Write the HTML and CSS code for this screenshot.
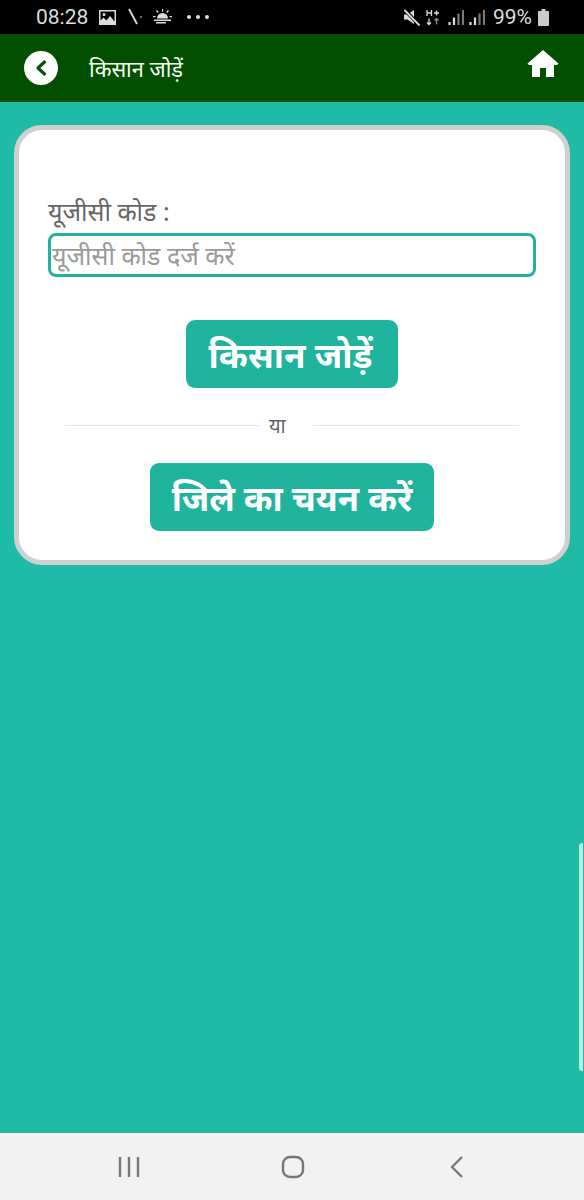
FILE: index.html
```html
<!DOCTYPE html>
<html lang="hi">
<head>
<meta charset="utf-8">
<title>किसान जोड़ें</title>
<link rel="stylesheet" href="styles.css">
</head>
<body>
<div class="phone">
  <div class="status">
    <div class="status-left">
      <span class="time">08:28</span>
      <svg class="pic" width="17" height="15" viewBox="0 0 17 15"><path fill="#ddd" fill-rule="evenodd" d="M0 0h17v15H0zM1.500 1.500v9l3-3 3 3 3.500-4.500 4.500 5.500V1.500zM5 3a1.500 1.500 0 1 1 0 3 1.500 1.500 0 0 1 0-3z"/></svg>
      <svg class="wifi" width="15" height="18" viewBox="0 0 15 18"><path d="M1 1l8 15" stroke="#ddd" stroke-width="1.800" fill="none"/><circle cx="13" cy="9" r="1" fill="#999"/></svg>
      <svg class="sun" width="19" height="16" viewBox="0 0 19 16"><path fill="#ddd" d="M4 9.500a5.500 5.500 0 0 1 11 0zM1 10.500h17v1.500H1zM3 13h10v1.500H3zM9 0h1.200v2.500H9zM3 2l1-1 1.800 2-1 1zM15 1l1 1-1.800 2-1-1zM0 7h2.500v1.200H0zM16.500 7H19v1.200h-2.500z"/></svg>
      <span class="dots"><i></i><i></i><i></i></span>
    </div>
    <div class="status-right">
      <svg class="mute" width="18" height="17" viewBox="0 0 18 17"><path fill="#ddd" d="M1 5.500h3.500L11 1v14L4.500 10.500H1z"/><path d="M1 0l15.500 16.500" stroke="#000" stroke-width="3.600"/><path d="M1.500 1l15 15.500" stroke="#ddd" stroke-width="1.800"/></svg>
      <svg class="net" width="14" height="17" viewBox="0 0 14 17"><path d="M1 1v6M5.500 1v6M1 4h4.500M8 4h5M10.500 1.500v5M3 9.500v6M1 13.500l2 2 2-2" stroke="#ddd" stroke-width="1.300" fill="none"/><path d="M10.500 15.500v-6M8.500 11.500l2-2 2 2" stroke="#888" stroke-width="1.300" fill="none"/></svg>
      <span class="signals">
        <svg width="16" height="17" viewBox="0 0 16 17"><path d="M1.500 13v3M6 8.500V16" stroke-width="2.200" stroke="#ddd" fill="none"/><path d="M10.500 4.500V16M15 1v15" stroke-width="2.200" stroke="#777" fill="none"/></svg>
        <svg width="16" height="17" viewBox="0 0 16 17"><path d="M1.500 13v3M6 8.500V16" stroke-width="2.200" stroke="#ddd" fill="none"/><path d="M10.500 4.500V16M15 1v15" stroke-width="2.200" stroke="#777" fill="none"/></svg>
      </span>
      <span class="batt-text">99%</span>
      <svg width="11" height="17" viewBox="0 0 11 17"><path fill="#ccc" d="M3.500 0h4v2H10a1 1 0 0 1 1 1v13a1 1 0 0 1-1 1H1a1 1 0 0 1-1-1V3a1 1 0 0 1 1-1h2.500z"/></svg>
    </div>
  </div>
  <header class="appbar">
    <div class="appbar-left">
      <span class="back"><svg width="16" height="18" viewBox="0 0 16 18"><path d="M11.500 3L5 9l6.500 6" stroke="#0c4f0a" stroke-width="3.200" fill="none" stroke-linecap="round" stroke-linejoin="round"/></svg></span>
      <h1 class="title">किसान जोड़ें</h1>
    </div>
    <svg class="home" width="32" height="27" viewBox="0 0 32 27"><path fill="#fff" d="M16 0L.5 13.500 2 15h3v12h8V18h6v9h8V15h3l1.500-1.500z"/></svg>
  </header>
  <main class="content">
    <section class="card">
      <label class="label" for="ugc">यूजीसी कोड :</label>
      <input class="input" id="ugc" type="text" placeholder="यूजीसी कोड दर्ज करें">
      <div class="btn-row"><button class="btn btn-add">किसान जोड़ें</button></div>
      <div class="or"><span class="line line-left"></span><span class="or-text">या</span><span class="line line-right"></span></div>
      <div class="btn-row btn-row-last"><button class="btn btn-district">जिले का चयन करें</button></div>
    </section>
    <div class="scrollbar"></div>
  </main>
  <nav class="navbar">
    <svg width="24" height="24" viewBox="0 0 24 24"><path d="M3 2v20M12 2v20M21 2v20" stroke="#777" stroke-width="2.400" fill="none"/></svg>
    <svg width="24" height="24" viewBox="0 0 24 24"><rect x="2" y="2" width="20" height="20" rx="7" stroke="#777" stroke-width="2.400" fill="none"/></svg>
    <svg width="24" height="24" viewBox="0 0 24 24"><path d="M17 2L7 12l10 10" stroke="#777" stroke-width="2.400" fill="none" stroke-linejoin="round"/></svg>
  </nav>
</div>
</body>
</html>
```
FILE: styles.css
```css
* { box-sizing: border-box; }
html, body { margin: 0; padding: 0; }
body { font-family: "Noto Sans", "Noto Sans Devanagari", "Lohit Devanagari", Roboto, sans-serif; }
.phone { width: 584px; height: 1200px; display: flex; flex-direction: column; overflow: hidden; background: #1fbba6; }
.status { height: 34px; flex: none; background: #000; display: flex; justify-content: space-between; align-items: center; padding: 0 35px 0 36px; color: #ddd; }
.status-left { display: flex; align-items: center; }
.status-right { display: flex; align-items: center; }
.time { font: 21px Roboto, sans-serif; width: 63px; }
.wifi { margin-left: 12px; }
.sun { margin-left: 10px; }
.batt-text { font: 21px Roboto, sans-serif; margin: 0 6px 0 8px; }
.net { margin-left: 5px; }
.signals { display: flex; gap: 5px; margin-left: 8px; }
.dots { display: flex; gap: 5px; margin-left: 15px; }
.dots i { width: 4px; height: 4px; border-radius: 50%; background: #ddd; display: block; }
.appbar { height: 68px; flex: none; background: #034f00; display: flex; justify-content: space-between; padding: 0 25px 0 24px; }
.appbar-left { display: flex; align-items: center; gap: 31px; }
.back { width: 34px; height: 34px; border-radius: 50%; background: #fff; display: flex; align-items: center; justify-content: center; }
.title { margin: 0; font-size: 21.800px; font-weight: 400; color: #f4fff4; }
.home { margin-top: 16px; }
.content { flex: 1; position: relative; padding: 23px 14px 0; }
.card { background: #fff; border: 5px solid #d0d0d0; border-radius: 28px; height: 440px; padding: 67px 29px 0; }
.label { display: block; font-size: 25px; line-height: 28px; color: #666; height: 36px; }
.input { display: block; width: 488px; height: 44px; border: 3px solid #27b09c; border-radius: 8px; padding: 0 1px; font: inherit; font-size: 25px; outline: none; background: #fff; }
.input::placeholder { color: #9a9a9a; opacity: 1; }
.btn-row { display: flex; justify-content: center; margin-top: 43px; }
.btn-row-last { margin-top: 26px; }
.btn { height: 68px; border: 0; border-radius: 9px; background: #20b49f; color: #fff; font: inherit; font-size: 35px; font-weight: 700; }
.btn-add { padding: 0 26px 0 23px; }
.btn-district { padding: 0 22px; font-size: 34.700px; }
.or { display: flex; align-items: center; margin: 25px 17px 0; height: 24px; }
.line { height: 1px; background: #e6e6e6; }
.line-left { flex: 194; }
.line-right { flex: 205; }
.or-text { width: 53px; padding-left: 9px; font-size: 20px; color: #666; }
.scrollbar { position: absolute; right: 1px; top: 741px; width: 4px; height: 228px; border-radius: 3px 0 0 3px; background: #b5ece2; }
.navbar { height: 68px; flex: none; background: #f2f2f2; border-top: 1px solid #4ea596; display: flex; justify-content: space-between; align-items: center; padding: 0 115px 0 117px; }
```
